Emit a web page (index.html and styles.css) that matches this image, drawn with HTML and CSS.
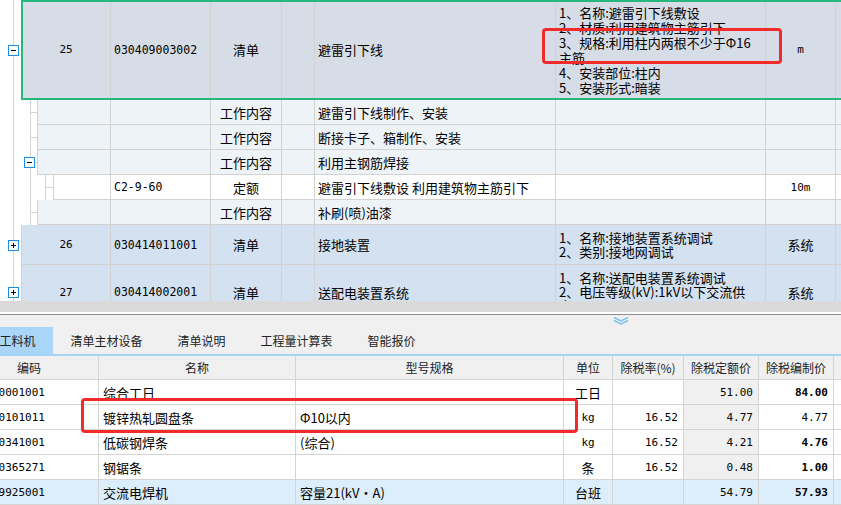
FILE: index.html
```html
<!DOCTYPE html>
<html lang="zh">
<head>
<meta charset="utf-8">
<title>清单</title>
<link rel="stylesheet" href="styles.css">
</head>
<body>
<div class="page">
  <div class="grid">
    <div class="row r25">
      <div class="gut g1"><svg class="exp" viewBox="0 0 11 11"><rect x="0.5" y="0.5" width="10" height="10" fill="#fff" stroke="#1a8ee2"/><path d="M3 5.5h5" stroke="#000"/></svg></div>
      <div class="cells sel">
        <div class="c first w0a ctr mono">25</div>
        <div class="c w1 code">030409003002</div>
        <div class="c w2 ctr">清单</div>
        <div class="c w3"></div>
        <div class="c w4">避雷引下线</div>
        <div class="c w5 desc lh15">
          <div>1、名称:避雷引下线敷设</div>
          <div>2、材质:利用建筑物主筋引下</div>
          <div>3、规格:利用柱内两根不少于Φ16</div>
          <div>主筋</div>
          <div>4、安装部位:柱内</div>
          <div>5、安装形式:暗装</div>
        </div>
        <div class="c w6 ctr mono">m</div>
        <div class="c w7"></div>
      </div>
    </div>
    <div class="row">
      <div class="gut g2"></div>
      <div class="cells wk">
        <div class="c first w0b"></div>
        <div class="c w1"></div>
        <div class="c w2 ctr">工作内容</div>
        <div class="c w3"></div>
        <div class="c w4">避雷引下线制作、安装</div>
        <div class="c w5"></div>
        <div class="c w6"></div>
        <div class="c w7"></div>
      </div>
    </div>
    <div class="row">
      <div class="gut g2"></div>
      <div class="cells wk">
        <div class="c first w0b"></div>
        <div class="c w1"></div>
        <div class="c w2 ctr">工作内容</div>
        <div class="c w3"></div>
        <div class="c w4">断接卡子、箱制作、安装</div>
        <div class="c w5"></div>
        <div class="c w6"></div>
        <div class="c w7"></div>
      </div>
    </div>
    <div class="row">
      <div class="gut g2 boxed"><svg class="exp" viewBox="0 0 11 11"><rect x="0.5" y="0.5" width="10" height="10" fill="#fff" stroke="#1a8ee2"/><path d="M3 5.5h5" stroke="#000"/></svg></div>
      <div class="cells wk">
        <div class="c first w0b"></div>
        <div class="c w1"></div>
        <div class="c w2 ctr">工作内容</div>
        <div class="c w3"></div>
        <div class="c w4">利用主钢筋焊接</div>
        <div class="c w5"></div>
        <div class="c w6"></div>
        <div class="c w7"></div>
      </div>
    </div>
    <div class="row">
      <div class="gut g3"></div>
      <div class="cells de">
        <div class="c first w0c"></div>
        <div class="c w1 code">C2-9-60</div>
        <div class="c w2 ctr">定额</div>
        <div class="c w3"></div>
        <div class="c w4">避雷引下线敷设 利用建筑物主筋引下</div>
        <div class="c w5"></div>
        <div class="c w6 ctr mono">10m</div>
        <div class="c w7"></div>
      </div>
    </div>
    <div class="row">
      <div class="gut g2"></div>
      <div class="cells wk">
        <div class="c first w0b"></div>
        <div class="c w1"></div>
        <div class="c w2 ctr">工作内容</div>
        <div class="c w3"></div>
        <div class="c w4">补刷(喷)油漆</div>
        <div class="c w5"></div>
        <div class="c w6"></div>
        <div class="c w7"></div>
      </div>
    </div>
    <div class="row r26">
      <div class="gut g1"><svg class="exp" viewBox="0 0 11 11"><rect x="0.5" y="0.5" width="10" height="10" fill="#fff" stroke="#1a8ee2"/><path d="M3 5.5h5M5.5 3v5" stroke="#000"/></svg></div>
      <div class="cells qd">
        <div class="c first w0a ctr mono">26</div>
        <div class="c w1 code">030414011001</div>
        <div class="c w2 ctr">清单</div>
        <div class="c w3"></div>
        <div class="c w4">接地装置</div>
        <div class="c w5 desc lh14">
          <div>1、名称:接地装置系统调试</div>
          <div>2、类别:接地网调试</div>
        </div>
        <div class="c w6 ctr">系统</div>
        <div class="c w7"></div>
      </div>
    </div>
    <div class="row r27">
      <div class="gut g1"><svg class="exp" viewBox="0 0 11 11"><rect x="0.5" y="0.5" width="10" height="10" fill="#fff" stroke="#1a8ee2"/><path d="M3 5.5h5M5.5 3v5" stroke="#000"/></svg></div>
      <div class="cells qd">
        <div class="c first w0a ctr mono">27</div>
        <div class="c w1 code">030414002001</div>
        <div class="c w2 ctr">清单</div>
        <div class="c w3"></div>
        <div class="c w4">送配电装置系统</div>
        <div class="c w5 desc lh14">
          <div>1、名称:送配电装置系统调试</div>
          <div>2、电压等级(kV):1kV以下交流供</div>
          <div>电</div>
        </div>
        <div class="c w6 ctr">系统</div>
        <div class="c w7"></div>
      </div>
    </div>
  </div>

  <div class="hscroll"></div>
  <div class="split"></div>

  <div class="tabbar">
    <div class="chev-row">
      <svg class="chev" viewBox="0 0 16 8"><path d="M1 0.5l7 3.5 7-3.5M1 3.5l7 3.5 7-3.5" fill="none" stroke="#79c2f0" stroke-width="1.4"/></svg>
    </div>
    <div class="tabs">
      <div class="tab on">工料机</div>
      <div class="tab">清单主材设备</div>
      <div class="tab">清单说明</div>
      <div class="tab">工程量计算表</div>
      <div class="tab">智能报价</div>
    </div>
  </div>

  <div class="sheet">
    <div class="srow head">
      <div class="s s0 ctr">编码</div>
      <div class="s s1 ctr">名称</div>
      <div class="s s2 ctr">型号规格</div>
      <div class="s s3 ctr">单位</div>
      <div class="s s4 ctr">除税率(%)</div>
      <div class="s s5 ctr">除税定额价</div>
      <div class="s s6 ctr">除税编制价</div>
      <div class="s s7"></div>
    </div>
    <div class="srow">
      <div class="s s0 scode">00001001</div>
      <div class="s s1">综合工日</div>
      <div class="s s2"></div>
      <div class="s s3 ctr">工日</div>
      <div class="s s4 num"></div>
      <div class="s s5 num gray">51.00</div>
      <div class="s s6 num bold">84.00</div>
      <div class="s s7"></div>
    </div>
    <div class="srow">
      <div class="s s0 scode">00101011</div>
      <div class="s s1">镀锌热轧圆盘条</div>
      <div class="s s2">Φ10以内</div>
      <div class="s s3 ctr mono">kg</div>
      <div class="s s4 num">16.52</div>
      <div class="s s5 num gray">4.77</div>
      <div class="s s6 num">4.77</div>
      <div class="s s7"></div>
    </div>
    <div class="srow">
      <div class="s s0 scode">00341001</div>
      <div class="s s1">低碳钢焊条</div>
      <div class="s s2">(综合)</div>
      <div class="s s3 ctr mono">kg</div>
      <div class="s s4 num">16.52</div>
      <div class="s s5 num gray">4.21</div>
      <div class="s s6 num bold">4.76</div>
      <div class="s s7"></div>
    </div>
    <div class="srow">
      <div class="s s0 scode">00365271</div>
      <div class="s s1">钢锯条</div>
      <div class="s s2"></div>
      <div class="s s3 ctr">条</div>
      <div class="s s4 num">16.52</div>
      <div class="s s5 num gray">0.48</div>
      <div class="s s6 num bold">1.00</div>
      <div class="s s7"></div>
    </div>
    <div class="srow hi">
      <div class="s s0 scode">99925001</div>
      <div class="s s1">交流电焊机</div>
      <div class="s s2">容量21(kV·A)</div>
      <div class="s s3 ctr">台班</div>
      <div class="s s4 num"></div>
      <div class="s s5 num">54.79</div>
      <div class="s s6 num bold">57.93</div>
      <div class="s s7"></div>
    </div>
  </div>

  <div class="mark m1"></div>
  <div class="mark m2"></div>
</div>
</body>
</html>
```

FILE: styles.css
```css
body {
  margin: 0;
}

.page {
  position: relative;
  width: 841px;
  height: 505px;
  overflow: hidden;
  background: #fff;
  font-family: "Noto Sans CJK SC", "Noto Sans", sans-serif;
  font-size: 13px;
  color: #000;
}

/* ---------- upper grid ---------- */
.grid {
  height: 301px;
  overflow: hidden;
}

.row {
  display: flex;
  height: 25px;
}

.r25 { height: 100px; }
.r26 { height: 40px; }
.r27 { height: 55px; }

.gut {
  flex: none;
  display: flex;
  align-items: center;
  box-sizing: border-box;
  background-repeat: no-repeat;
}

.g1 {
  width: 21px;
  padding-left: 8px;
  background-image: linear-gradient(#d4d4d4, #d4d4d4);
  background-position: 13px 0;
  background-size: 1px 100%;
}

.g2 {
  width: 37px;
  padding-left: 24px;
  background-image:
    linear-gradient(#d4d4d4, #d4d4d4),
    linear-gradient(#d4d4d4, #d4d4d4),
    linear-gradient(#d4d4d4, #d4d4d4);
  background-position: 13px 0, 30px 0, 30px 50%;
  background-size: 1px 100%, 1px 100%, 7px 1px;
}

.g3 {
  width: 53px;
  background-image:
    linear-gradient(#d4d4d4, #d4d4d4),
    linear-gradient(#d4d4d4, #d4d4d4),
    linear-gradient(#d4d4d4, #d4d4d4),
    linear-gradient(#d4d4d4, #d4d4d4);
  background-position: 13px 0, 30px 0, 45px 0, 45px 50%;
  background-size: 1px 100%, 1px 100%, 1px 100%, 8px 1px;
}

.exp {
  width: 11px;
  height: 11px;
  flex: none;
  display: block;
}

.cells {
  display: flex;
  flex: none;
}

.sel {
  background: #d6dde6;
  outline: 2px solid #27b67b;
  outline-offset: -2px;
}
.wk { background: #eef3f8; }
.de { background: #fff; }
.qd { background: #d3e1f1; }

.c {
  box-sizing: border-box;
  flex: none;
  display: flex;
  align-items: center;
  padding: 0 3px;
  border-right: 1px solid #d2d2d2;
  border-bottom: 1px solid #d2d2d2;
  white-space: nowrap;
  overflow: hidden;
}

.c.first { border-left: 1px solid #d2d2d2; }

.ctr { justify-content: center; }

.w0a { width: 90px; }
.w0b { width: 74px; }
.w0c { width: 58px; }
.w1 { width: 100px; }
.w2 { width: 71px; }
.w3 { width: 33px; }
.w4 { width: 241px; }
.w5 { width: 210px; }
.w6 { width: 70px; }
.w7 { width: 60px; }

.desc {
  flex-direction: column;
  justify-content: center;
  align-items: flex-start;
}
.lh15 { line-height: 15px; }
.lh14 { line-height: 14px; }

.code {
  font-family: "DejaVu Sans Mono", monospace;
  font-size: 11.5px;
}

.mono {
  font-family: "DejaVu Sans Mono", monospace;
  font-size: 11px;
}

/* ---------- splitter ---------- */
.hscroll {
  height: 11px;
  background: #dadada;
}

.split {
  height: 2px;
  background: #fff;
  border-bottom: 1px solid #8d8d8d;
}

/* ---------- tabs ---------- */
.tabbar {
  background: #f0f0f0;
}

.chev-row {
  height: 12px;
  display: flex;
  align-items: flex-start;
  padding-left: 613px;
  padding-top: 2px;
  box-sizing: border-box;
}

.chev {
  width: 16px;
  height: 8px;
  display: block;
}

.tabs {
  display: flex;
  height: 27px;
  margin-left: -18px;
  border-bottom: 2px solid #a6d4f6;
}

.tab {
  padding: 0 17.5px;
  display: flex;
  align-items: center;
  font-size: 12px;
  color: #222;
}

.tab.on {
  background: #a9d5f8;
}

/* ---------- lower sheet ---------- */
.sheet {
  margin-left: -40px;
}

.srow {
  display: flex;
  height: 25px;
}

.srow.head {
  height: 24px;
  background: #f0f0f0;
  font-size: 12px;
  color: #222;
}

.srow.hi { background: #dcedfc; }

.s {
  box-sizing: border-box;
  flex: none;
  display: flex;
  align-items: center;
  padding: 0 4px;
  border-right: 1px solid #d4d4d4;
  border-bottom: 1px solid #d4d4d4;
  white-space: nowrap;
  overflow: hidden;
}

.s0 { width: 139px; }
.s1 { width: 197px; }
.s2 { width: 268px; }
.s3 { width: 49px; }
.s4 { width: 71px; }
.s5 { width: 75px; }
.s6 { width: 75px; }
.s7 { width: 60px; }

.scode {
  padding-left: 32px;
  font-family: "DejaVu Sans Mono", monospace;
  font-size: 11px;
}

.num {
  justify-content: flex-end;
  padding-right: 5px;
  font-family: "DejaVu Sans Mono", monospace;
  font-size: 11px;
}

.gray { background: #f0f0f0; }

.bold { font-weight: bold; }

/* ---------- annotation marks ---------- */
.mark {
  position: absolute;
  box-sizing: border-box;
  border: 3px solid #f32a2a;
  border-radius: 4px;
}

.m1 {
  left: 542px;
  top: 28px;
  width: 240px;
  height: 36px;
}

.m2 {
  left: 81px;
  top: 398px;
  width: 497px;
  height: 35px;
}
```
